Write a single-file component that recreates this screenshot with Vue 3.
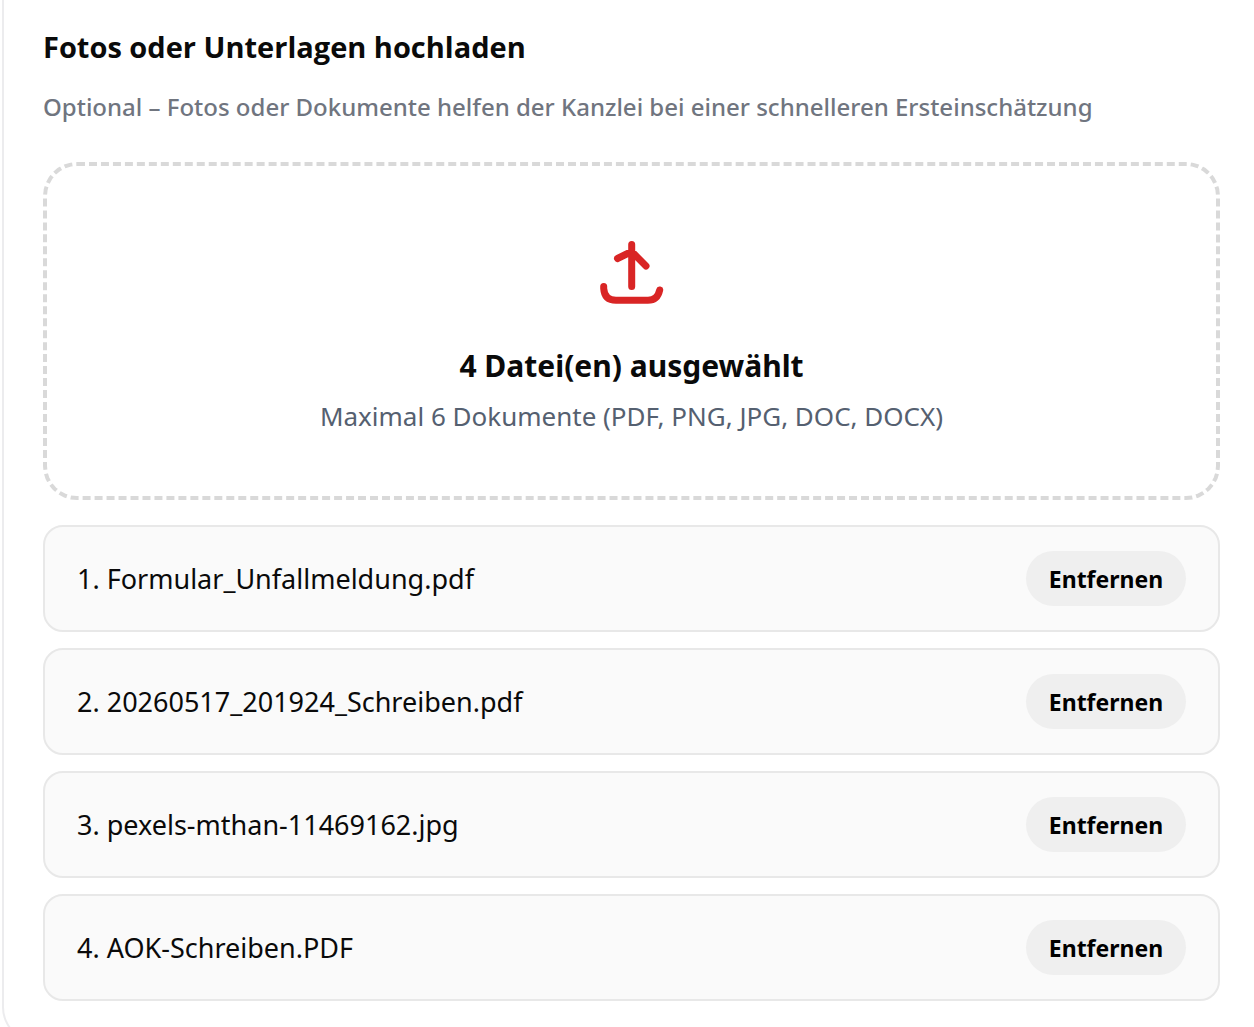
<script setup>
import { ref, computed } from 'vue'

const files = ref([
  'Formular_Unfallmeldung.pdf',
  '20260517_201924_Schreiben.pdf',
  'pexels-mthan-11469162.jpg',
  'AOK-Schreiben.PDF',
])
const maxFiles = 6
const summary = computed(() => `${files.value.length} Datei(en) ausgewählt`)

function addFiles(event) {
  const names = Array.from(event.target.files, (file) => file.name)
  files.value = [...files.value, ...names].slice(0, maxFiles)
}

function removeFile(index) {
  files.value.splice(index, 1)
}
</script>

<template>
  <main class="page">
    <section class="card">
      <h2 class="title">Fotos oder Unterlagen hochladen</h2>
      <p class="hint">Optional – Fotos oder Dokumente helfen der Kanzlei bei einer schnelleren Ersteinschätzung</p>

      <label class="dropzone" for="upload">
        <input id="upload" class="file-input" type="file" multiple accept=".pdf,.png,.jpg,.doc,.docx" @change="addFiles" />
        <svg class="icon" viewBox="0 0 66 66" aria-hidden="true">
          <path d="M32.7 4.5V46.5M18.5 18.5L32.7 11.5L47 26M4.7 46.5V48.5Q5.5 60.3 17 60.3H49Q58.5 60.3 60.7 50" />
        </svg>
        <span class="summary">{{ summary }}</span>
        <span class="limits">Maximal {{ maxFiles }} Dokumente (PDF, PNG, JPG, DOC, DOCX)</span>
      </label>

      <ul class="files">
        <li v-for="(file, index) in files" :key="file" class="file">
          <span class="name">{{ index + 1 }}. {{ file }}</span>
          <button class="remove" type="button" @click="removeFile(index)">Entfernen</button>
        </li>
      </ul>
    </section>
  </main>
</template>

<style>
body {
  margin: 0;
  background: #fff;
}
</style>

<style scoped>
.page {
  height: 100vh;
  overflow: hidden;
  padding: 0 0 0 2px;
  box-sizing: border-box;
  font-family: "Segoe UI", "Noto Sans", "Open Sans", sans-serif;
  color: #0a0a0a;
}

.card {
  padding: 23px 34px 40px 39px;
  border: 2px solid #ececee;
  border-width: 0 0 2px 2px;
  border-radius: 0 0 0 36px;
}

.title {
  margin: 0;
  font-family: "Segoe UI", "Open Sans", "Noto Sans", sans-serif;
  font-size: 29px;
  line-height: 48px;
  font-weight: 700;
}

.hint {
  margin: 16px 0 35px;
  font-size: 24px;
  line-height: 40px;
  font-weight: 500;
  color: #70757f;
}

.dropzone {
  position: relative;
  display: flex;
  flex-direction: column;
  align-items: center;
  padding: 74px 24px 56px;
  border: 4px dashed #d9d9d9;
  border-radius: 34px;
  cursor: pointer;
}

.file-input {
  position: absolute;
  width: 1px;
  height: 1px;
  opacity: 0;
}

.icon {
  width: 66px;
  height: 66px;
  margin-bottom: 36px;
  fill: none;
  stroke: #d92525;
  stroke-width: 7;
  stroke-linecap: round;
  stroke-linejoin: round;
}

.summary {
  font-size: 30px;
  line-height: 48px;
  font-weight: 700;
}

.limits {
  margin-top: 2px;
  font-size: 26px;
  line-height: 48px;
  color: #556070;
}

.files {
  display: flex;
  flex-direction: column;
  gap: 16px;
  margin: 25px 0 0;
  padding: 0;
  list-style: none;
}

.file {
  display: flex;
  align-items: center;
  justify-content: space-between;
  gap: 16px;
  padding: 24px 32px;
  border: 2px solid #e8e8e8;
  border-radius: 20px;
  background: #fafafa;
}

.name {
  font-size: 27px;
  line-height: 40px;
}

.remove {
  width: 160px;
  height: 55px;
  padding: 0;
  border: 0;
  border-radius: 28px;
  background: #efefef;
  color: #000;
  font: inherit;
  font-size: 23px;
  font-weight: 700;
  cursor: pointer;
}
</style>
